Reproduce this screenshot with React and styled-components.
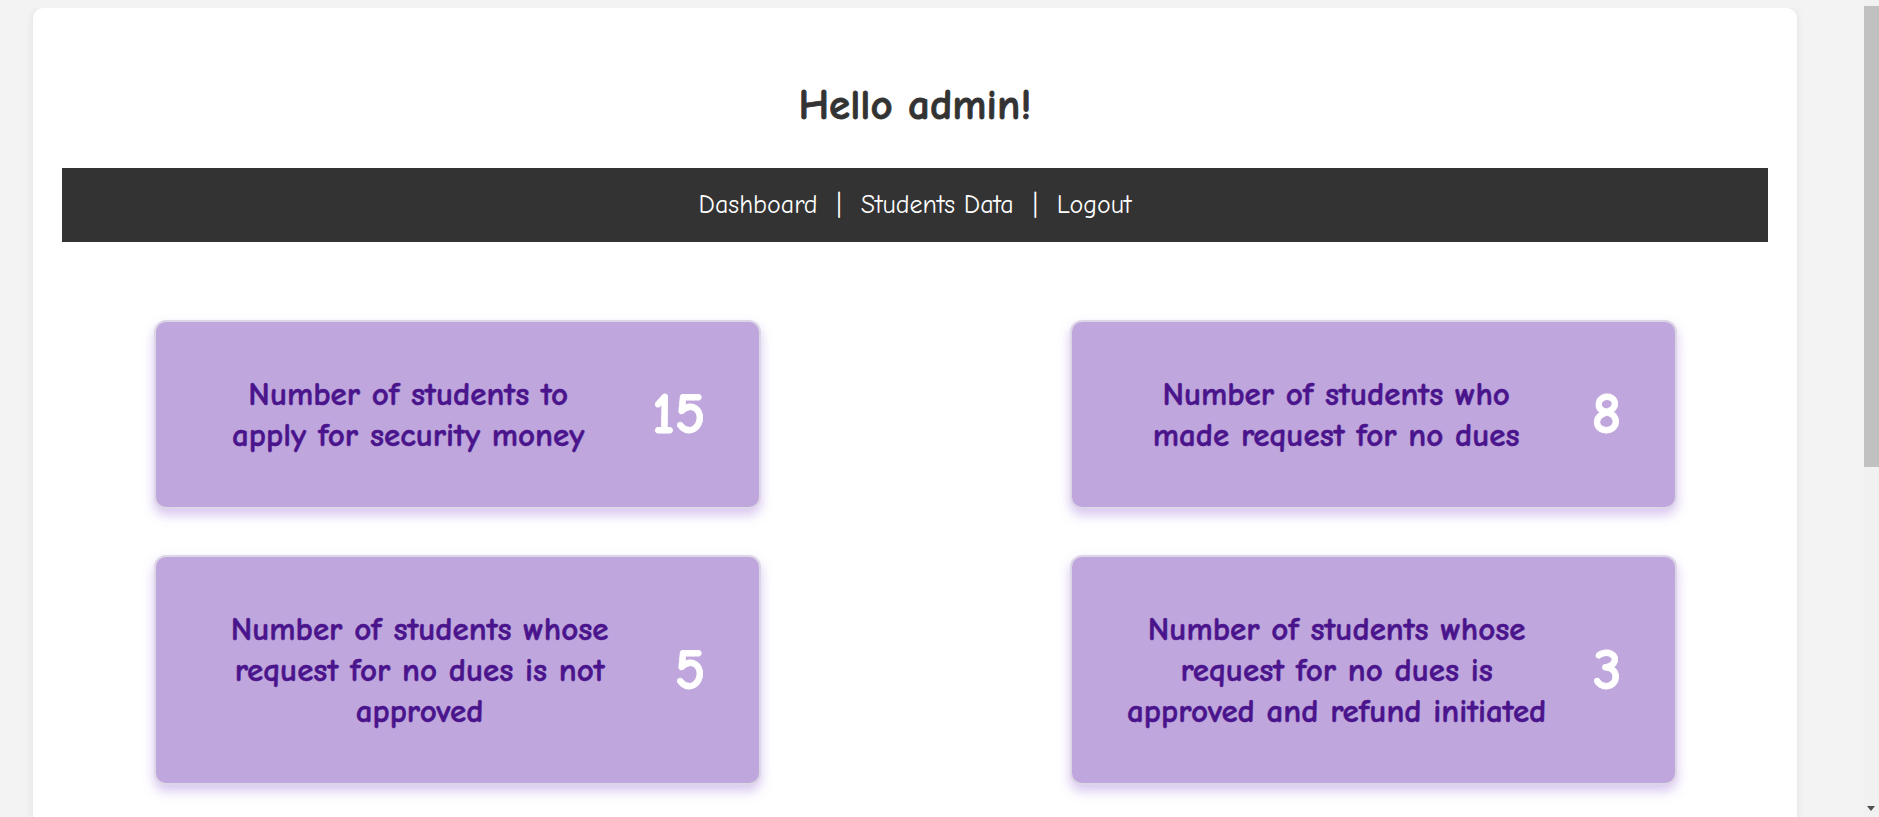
import React from 'react';
import styled, { createGlobalStyle } from 'styled-components';

const GlobalStyle = createGlobalStyle`
	body {
		margin: 8px;
		background: #f3f3f3;
		font-family: 'Comic Sans MS', 'Comic Neue', 'DejaVu Sans', sans-serif;
	}
`;

const Page = styled.div`
	margin: 0 74px 0 25px;
	min-height: 1380px;
	padding: 0 29px;
	background: #fff;
	border-radius: 10px;
	box-shadow: 0 0 10px rgba(0, 0, 0, 0.07);
`;

const Greeting = styled.h1`
	margin: 0;
	padding: 73px 0 39px;
	text-align: center;
	font-size: 43px;
	line-height: 48px;
	font-weight: bold;
	color: #333;
	-webkit-text-stroke: 0.8px #333;
`;

const NavBar = styled.nav`
	display: flex;
	justify-content: center;
	align-items: center;
	gap: 19px;
	height: 74px;
	background: #333;
	color: #fff;
	font-size: 26px;
`;

const NavLink = styled.a`
	color: #fff;
	text-decoration: none;
	cursor: pointer;
`;

const Divider = styled.span`
	color: #fff;
`;

const Grid = styled.div`
	display: grid;
	grid-template-columns: 607px 607px;
	justify-content: center;
	column-gap: 309px;
	row-gap: 46px;
	padding-top: 78px;
`;

const StatCard = styled.div`
	display: flex;
	align-items: center;
	gap: 44px;
	padding: 52px 53px 51px 53px;
	background: #bfa6dc;
	border: 2px solid #ddd6e6;
	border-radius: 12px;
	box-shadow: 0 6px 12px rgba(140, 90, 210, 0.35);
`;

const Label = styled.p`
	flex: 1;
	min-width: 0;
	margin: 0;
	text-align: center;
	white-space: nowrap;
	font-size: 33px;
	line-height: 41px;
	font-weight: bold;
	color: #4a148c;
	-webkit-text-stroke: 0.5px #4a148c;
`;

const Count = styled.span`
	font-size: 58px;
	line-height: 60px;
	font-weight: bold;
	color: #fff;
	-webkit-text-stroke: 0.8px #fff;
`;

const Scrollbar = styled.div`
	position: fixed;
	top: 0;
	right: 0;
	width: 15px;
	height: 100vh;
	background: #f1f1f1;
`;

const Thumb = styled.div`
	margin-top: 6px;
	height: 461px;
	background: #c1c1c1;
`;

const ArrowDown = styled.div`
	position: absolute;
	left: 3px;
	bottom: 6px;
	border-left: 4.5px solid transparent;
	border-right: 4.5px solid transparent;
	border-top: 5px solid #505050;
`;

const stats = [
	{ label: ['Number of students to', 'apply for security money'], count: 15 },
	{ label: ['Number of students who', 'made request for no dues'], count: 8 },
	{
		label: ['Number of students whose', 'request for no dues is not', 'approved'],
		count: 5,
	},
	{
		label: ['Number of students whose', 'request for no dues is', 'approved and refund initiated'],
		count: 3,
	},
];

function App() {
	return (
		<>
			<GlobalStyle />
			<Page>
				<Greeting>Hello admin!</Greeting>
				<NavBar>
					<NavLink>Dashboard</NavLink>
					<Divider>|</Divider>
					<NavLink>Students Data</NavLink>
					<Divider>|</Divider>
					<NavLink>Logout</NavLink>
				</NavBar>

				<Grid>
					{stats.map((s) => (
						<StatCard key={s.count}>
							<Label>
								{s.label.map((line, i) => (
									<React.Fragment key={i}>
										{i > 0 && <br />}
										{line}
									</React.Fragment>
								))}
							</Label>
							<Count>{s.count}</Count>
						</StatCard>
					))}
				</Grid>
			</Page>

			<Scrollbar>
				<Thumb />
				<ArrowDown />
			</Scrollbar>
		</>
	);
}

export default App;
